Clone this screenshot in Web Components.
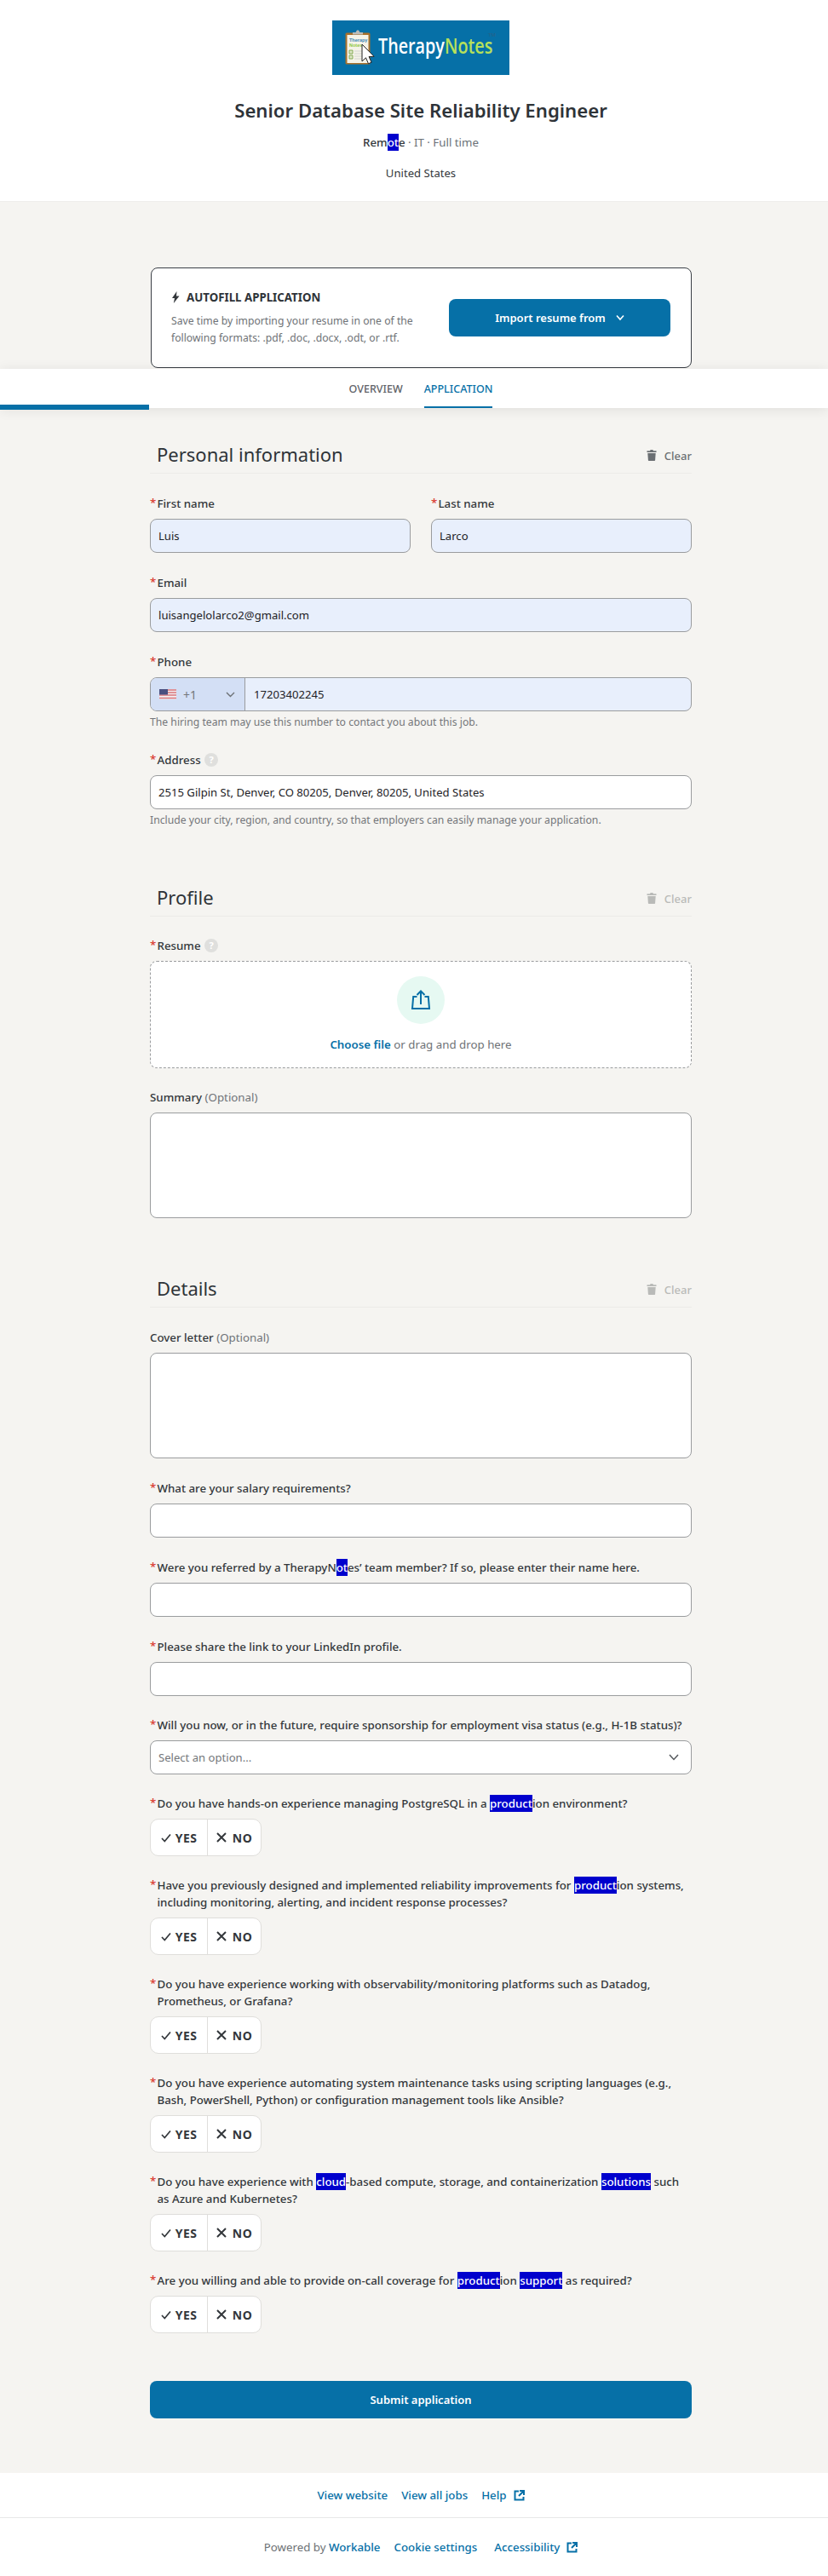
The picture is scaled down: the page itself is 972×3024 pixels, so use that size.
<!DOCTYPE html>
<html lang="en"><head><meta charset="utf-8"><title>Senior Database Site Reliability Engineer</title>
<style>
html,body{margin:0;padding:0;background:#f5f4f1}
body{font-family:"Noto Sans","Open Sans",Arial,sans-serif;color:#2e3338;font-size:13px;width:972px}
</style></head><body>
<app-page></app-page>
<template id="sec-t"><style>:host{display:block;margin-top:var(--mt,0)}
.h{display:flex;justify-content:space-between;align-items:center;height:45px;border-bottom:1px solid #ecebe8;box-sizing:border-box;padding:0 0 0 8px}
h2{margin:0;font:400 22px/32px "Noto Sans",sans-serif;color:#2e3338}
.c{display:flex;align-items:center;gap:9px;font-size:13px;font-weight:500;color:var(--clr,#6b6f73);margin-top:3px}
svg{width:12px;height:13px;fill:currentColor;display:block}</style>
<div class="h"><h2><slot name="title"></slot></h2><div class="c"><svg viewBox="0 0 12 13"><path d="M4 1.200 4.600 0h2.800L8 1.200h3.500V3H.5V1.200zM1.300 4h9.400l-.6 8.300a.8.8 0 0 1-.8.7H2.700a.8.8 0 0 1-.8-.7z"/></svg>Clear</div></div>
<slot></slot></template>
<template id="lab-t"><style>:host{display:block;font-size:13.3px;font-weight:500;line-height:20px;color:#33373b;position:relative}
:host([req]){padding-left:8.5px}
.s{position:absolute;left:0;top:-1px;color:#d9352b}
:host(:not([req])) .s{display:none}
::slotted(em){font-style:normal;font-weight:400;color:#6f7378}
::slotted(mark){background:#0000cd;color:#fff;padding:1px 0}</style><span class="s">*</span><slot></slot></template>
<template id="help-t"><style>:host{display:inline-block;width:16px;height:16px;border-radius:50%;background:#dfdfdd;color:#fff;font-size:11px;font-weight:700;line-height:16px;text-align:center;vertical-align:top;margin:2px 0 0 1px}</style>?</template>
<template id="fld-t"><style>:host{display:block;margin-top:var(--gap,25px)}
.box{display:flex;align-items:center;box-sizing:border-box;height:var(--ht,40px);margin-top:8px;border:1px solid #9a9c9e;border-radius:8px;padding:0 9px;background:#fff;font-size:13.1px;color:#1e2226}
:host([filled]) .box{background:#e8effc}
.v{flex:1;white-space:nowrap;letter-spacing:var(--ls,0)}
.h{font-size:12.2px;line-height:20px;color:#74767a;margin-top:3px;margin-bottom:-2px}
.h:empty{display:none}
::slotted(svg){margin-right:5px}</style><slot name="label"></slot><div class="box"><span class="v" id="v"></span><slot name="tail"></slot></div><div class="h" id="h"></div></template>
<template id="tog-t"><style>:host{display:flex;margin-top:8px;height:44px;box-sizing:border-box;width:131px;border:1px solid #dfdedb;border-radius:10px;background:#fff;overflow:hidden;font-size:14px;font-weight:700;color:#33373b;letter-spacing:.4px}
div{display:flex;align-items:center;justify-content:center;gap:5px}
.y{width:66px;border-right:1px solid #dfdedb}
.n{flex:1;gap:7px}
svg{display:block;fill:none;stroke:#33373b;stroke-width:1.7}</style>
<div class="y"><svg width="12" height="11" viewBox="0 0 12 11"><path d="M1 6 4.300 9.500 11 1.500"/></svg>YES</div>
<div class="n"><svg width="12" height="12" viewBox="0 0 12 12"><path d="M1 1l10 10M11 1 1 11" stroke-width="2"/></svg>NO</div></template>
<template id="q-t"><style>:host{display:block;margin-top:24px}</style><slot></slot><tog-gle></tog-gle></template>
<template id="logo-t"><style>:host{display:block;width:208px;height:64px;background:#0670a7;position:relative;overflow:hidden}
svg{position:absolute;left:15px;top:11px}
.t{position:absolute;left:54px;top:12px;font:600 25px/34px "Open Sans",sans-serif;color:#fff;white-space:nowrap;transform:scaleX(.79);transform-origin:0 0}
.t b{font-weight:600;color:#b6e05a}
.tm{position:absolute;left:183px;top:13px;font:400 6px/8px "Liberation Sans",sans-serif;color:#2c5f86}</style>
<svg width="38" height="44" viewBox="0 0 38 44"><rect x=".5" y="3.500" width="29" height="37" rx="1.500" fill="#a9702a"/><rect x="2.500" y="6" width="25" height="33" fill="#f5f3e8"/><path d="M9 5.500V3h3.500L14 .5h2L17.500 3H21v2.500z" fill="#bcbcb8"/>
<text x="5" y="14" font-family="Liberation Sans" font-size="5.500" font-weight="700" fill="#3d87b5">Therapy</text><text x="5" y="20" font-family="Liberation Sans" font-size="5.500" font-weight="700" fill="#8fc742">Notes</text>
<path d="M5 24h4v4H5zM5 30h4v4H5z" fill="#dfe7c9" stroke="#6f9c3a" stroke-width=".8"/><path d="M11 25h13M11 28h13M11 31h13M11 34h13" stroke="#d3d3cf" stroke-width=".9"/>
<path d="M20 17v20l4.500-4.200 3 7 3.600-1.600-3-6.700 6-.2z" fill="#fff" stroke="#222"/></svg>
<span class="t">Therapy<b>Notes</b></span><span class="tm">TM</span></template>
<template id="tabs-t"><style>:host{display:block;position:relative;height:46px;background:#fff;box-shadow:0 2px 14px rgba(0,0,0,.09);z-index:2}
.tabs{display:flex;justify-content:center;gap:25px;font-size:12.5px;font-weight:500;height:46px;box-sizing:border-box;padding:14px 0 0 16px}
.tabs span{display:block;height:32px;box-sizing:border-box;line-height:20px;color:#5f6368}
.tabs .on{color:#0670a7;border-bottom:2px solid #0670a7}
.bar{position:absolute;left:0;top:42px;width:175px;height:6px;background:#0670a7}</style><div class="tabs"><span>OVERVIEW</span><span class="on">APPLICATION</span></div><div class="bar"></div></template>
<template id="ph-t"><style>:host{display:block;margin-top:25px}
.box{display:flex;height:40px;margin-top:8px;box-sizing:border-box;border:1px solid #9a9c9e;border-radius:8px;background:#e8effc;overflow:hidden;font-size:13.1px;color:#1e2226;align-items:stretch}
.sel{width:111px;box-sizing:border-box;background:#d3dff5;border-right:1px solid #9a9c9e;display:flex;align-items:center;padding-left:10px;color:#74777b;font-size:14px;gap:8px}
.sel .c{margin-left:26px}
.n{display:flex;align-items:center;padding-left:10px}
.h{font-size:12.2px;line-height:20px;color:#74767a;margin-top:3px}</style><slot></slot><div class="box"><div class="sel"><svg width="20" height="12" viewBox="0 0 20 12"><rect width="20" height="12" fill="#f3eef0"/><path d="M0 1h20M0 4h20M0 7h20M0 10.500h20" stroke="#d9757b" stroke-width="1.500"/><rect width="10" height="6.500" fill="#4a4f80"/></svg><span>+1</span><svg class="c" width="11" height="7" viewBox="0 0 11 7" fill="none" stroke="#6d7175" stroke-width="1.400"><path d="M1 1l4.500 4.500L10 1"/></svg></div><div class="n">17203402245</div></div><div class="h">The hiring team may use this number to contact you about this job.</div></template>
<template id="page-t"><style>:host{display:block}
.top{background:#fff;height:237px;box-sizing:border-box;padding:24px 0 0 16px;text-align:center;border-bottom:1px solid #efeeeb}
the-logo{margin:0 auto}
h1{margin:24px 0 0;font:600 22.2px/36px "Noto Sans",sans-serif;color:#2e3338}
.meta{font-size:13.3px;line-height:20px;margin-top:9px;color:#6b7177}
.meta b{font-weight:500;color:#33373b}
.meta mark{background:#0000cd;color:#fff;padding:1px 0}
.loc{font-size:13.1px;line-height:20px;margin-top:16px;color:#33373b}
.grey{height:77px}
.wrap{width:636px;margin:0 0 0 176px}
.auto{box-sizing:border-box;height:118px;margin-left:1px;width:635px;background:#fff;border:1px solid #3a3f46;border-radius:8px;display:flex;align-items:center;justify-content:space-between;padding:0 24px 0 23px}
.at{font-size:13.3px;font-weight:700;color:#2e3338;display:flex;align-items:center;gap:8px;line-height:20px}
.at svg{display:block}
.ad{font-size:12.2px;line-height:20px;color:#6e7276;margin-top:8px;width:300px}
.btn{background:#0670a7;color:#fff;font-weight:600;font-size:13px;border-radius:8px;display:flex;align-items:center;justify-content:center}
.imp{width:260px;height:44px;gap:12px}
.two{display:grid;grid-template-columns:306px 306px;gap:24px}
.drop{box-sizing:border-box;height:126px;margin-top:8px;border:1px dashed #9a9c9e;border-radius:8px;background:#fff;display:flex;flex-direction:column;align-items:center;padding-top:17px}
.circ{width:56px;height:56px;border-radius:50%;background:#e6f9f2;display:flex;align-items:center;justify-content:center}
.dt{font-size:13.3px;line-height:20px;margin-top:14px;color:#6e7276}
.dt b{font-weight:600;color:#0670a7}
.sub{margin-top:56px}
.sub .btn{height:44px}
.foot{background:#fff;height:121px;margin-top:64px;color:#6e7276;font-size:13.3px}
.r1,.r2{display:flex;justify-content:center;align-items:center;padding-left:16px}
.r1{height:52px;gap:16px;border-bottom:1px solid #e8e8e8;color:#0670a7;font-weight:500}
.r2{height:68px}
.r1 svg,.r2 svg{display:block;fill:none;stroke:#0670a7;stroke-width:2}
.r1 i{font-style:normal;display:flex;align-items:center;gap:8px}
.r2 .a{color:#0670a7;font-weight:500}</style>
<div class="top"><the-logo></the-logo><h1>Senior Database Site Reliability Engineer</h1>
 <div class="meta"><b>Rem<mark>ot</mark>e</b> · IT · Full time</div><div class="loc">United States</div></div>
<div class="grey"></div>
<div class="wrap"><div class="auto"><div><div class="at"><svg width="10" height="14" viewBox="0 0 10 14"><path d="M6.500 0 1 8h3L2.800 14 9.500 5.500H6z" fill="#33373b"/></svg>AUTOFILL APPLICATION</div>
<div class="ad">Save time by importing your resume in one of the following formats: .pdf, .doc, .docx, .odt, or .rtf.</div></div>
<div class="btn imp">Import resume from <svg width="10" height="8" viewBox="0 0 10 8" fill="none" stroke="#fff" stroke-width="1.600"><path d="M1 1.500 5 6l4-4.500"/></svg></div></div></div>
<app-tabs style="margin-top:1px"></app-tabs>
<div class="wrap">
<form-section style="--mt:32px"><span slot="title">Personal information</span>
 <div class="two"><form-field filled value="Luis"><form-label slot="label" req>First name</form-label></form-field><form-field filled value="Larco"><form-label slot="label" req>Last name</form-label></form-field></div>
 <form-field filled value="luisangelolarco2@gmail.com"><form-label slot="label" req>Email</form-label></form-field>
 <phone-field><form-label req>Phone</form-label></phone-field>
 <form-field value="2515 Gilpin St, Denver, CO 80205, Denver, 80205, United States" help="Include your city, region, and country, so that employers can easily manage your application." style="--gap:24px"><form-label slot="label" req>Address <help-dot></help-dot></form-label></form-field>
</form-section>
<form-section style="--mt:60px;--clr:#b9bab8"><span slot="title">Profile</span>
 <form-label req style="margin-top:24px">Resume <help-dot></help-dot></form-label>
 <div class="drop"><div class="circ"><svg width="24" height="24" viewBox="0 0 24 24" fill="none" stroke="#0670a7" stroke-width="2"><path d="M7.500 8H3.200L2 22h20L20.800 8h-4.300M12 17V2M7.500 6 12 1.500 16.500 6"/></svg></div><div class="dt"><b>Choose file</b> or drag and drop here</div></div>
 <form-field style="--ht:124px;--gap:24px"><form-label slot="label">Summary <em>(Optional)</em></form-label></form-field>
</form-section>
<form-section style="--mt:60px;--clr:#b9bab8"><span slot="title">Details</span>
 <form-field style="--ht:124px"><form-label slot="label">Cover letter <em>(Optional)</em></form-label></form-field>
 <form-field><form-label slot="label" req>What are your salary requirements?</form-label></form-field>
 <form-field><form-label slot="label" req>Were you referred by a TherapyN<mark>ot</mark>es’ team member? If so, please enter their name here.</form-label></form-field>
 <form-field><form-label slot="label" req>Please share the link to your LinkedIn profile.</form-label></form-field>
 <form-field placeholder="Select an option..." style="--gap:24px"><form-label slot="label" req>Will you now, or in the future, require sponsorship for employment visa status (e.g., H-1B status)?</form-label><svg slot="tail" width="12" height="8" viewBox="0 0 12 8" fill="none" stroke="#55595d" stroke-width="1.500"><path d="M1 1l5 5.500L11 1"/></svg></form-field>
 <yes-no><form-label req>Do you have hands-on experience managing PostgreSQL in a <mark>product</mark>ion environment?</form-label></yes-no>
 <yes-no><form-label req>Have you previously designed and implemented reliability improvements for <mark>product</mark>ion systems, including monitoring, alerting, and incident response processes?</form-label></yes-no>
 <yes-no><form-label req>Do you have experience working with observability/monitoring platforms such as Datadog, Prometheus, or Grafana?</form-label></yes-no>
 <yes-no><form-label req>Do you have experience automating system maintenance tasks using scripting languages (e.g., Bash, PowerShell, Python) or configuration management tools like Ansible?</form-label></yes-no>
 <yes-no><form-label req>Do you have experience with <mark>cloud</mark>-based compute, storage, and containerization <mark>solutions</mark> such as Azure and Kubernetes?</form-label></yes-no>
 <yes-no><form-label req>Are you willing and able to provide on-call coverage for <mark>product</mark>ion <mark>support</mark> as required?</form-label></yes-no>
</form-section>
<div class="sub"><div class="btn">Submit application</div></div></div>
<div class="foot"><div class="r1"><span>View website</span><span>View all jobs</span><i>Help <svg width="13" height="13" viewBox="0 0 13 13"><path d="M6 1.500H1.500v10h10V8M7 1h5v5M12 1 6 7"/></svg></i></div>
<div class="r2"><span>Powered by <span class="a">Workable</span></span><span class="a" style="margin-left:16px">Cookie settings</span><span class="a" style="margin-left:20px">Accessibility</span><svg style="margin-left:8px" width="13" height="13" viewBox="0 0 13 13"><path d="M6 1.500H1.500v10h10V8M7 1h5v5M12 1 6 7"/></svg></div></div></template>
<script>
function tpl(id){return document.getElementById(id).content.cloneNode(true)}
function simple(name,id,init){customElements.define(name,class extends HTMLElement{constructor(){super();this.attachShadow({mode:'open'}).appendChild(tpl(id));}connectedCallback(){if(init)init(this)}})}
simple('the-logo','logo-t');simple('app-tabs','tabs-t');simple('form-section','sec-t');simple('form-label','lab-t');simple('help-dot','help-t');simple('tog-gle','tog-t');simple('yes-no','q-t');simple('phone-field','ph-t');
simple('form-field','fld-t',el=>{const r=el.shadowRoot;const v=r.getElementById('v');
 if(el.hasAttribute('value'))v.textContent=el.getAttribute('value');
 if(el.hasAttribute('placeholder')){v.textContent=el.getAttribute('placeholder');v.style.color='#74777b'}
 if(el.hasAttribute('help'))r.getElementById('h').textContent=el.getAttribute('help');});
simple('app-page','page-t');
</script>
</body></html>
